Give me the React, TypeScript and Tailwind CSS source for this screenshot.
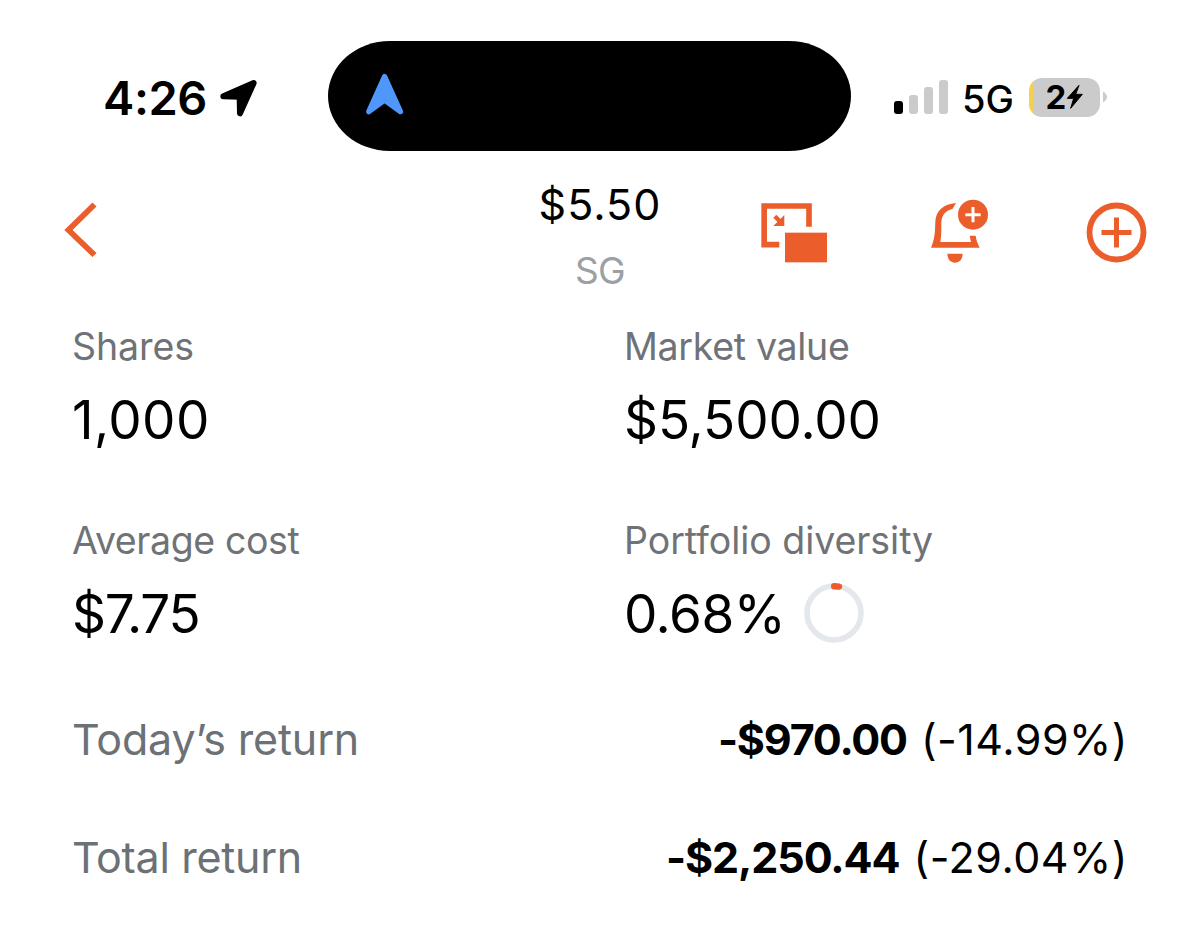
import type { ReactNode } from "react";

const ACCENT = "#eb5d2a";

function LocationArrow() {
  return (
    <svg className="ml-[13px] h-[40px] w-[38px]" viewBox="420 53 114 120">
      <path
        d="M430 107.5 L521 68 L480 159 L479 109 Z"
        fill="#000"
        stroke="#000"
        strokeWidth="18"
        strokeLinejoin="round"
      />
    </svg>
  );
}

function StatusBar() {
  return (
    <div className="flex h-[110px] items-center">
      <div className="flex w-[328px] items-center pt-[3px] pl-[103px]">
        <span className="text-[47px] leading-none font-semibold tracking-[-0.4px]">4:26</span>
        <LocationArrow />
      </div>
      <div className="flex h-[110px] w-[523px] items-center rounded-[62px/55px] bg-black pb-[4px] pl-[36px]">
        <svg className="h-[44px] w-[42px]" viewBox="0 0 42 44">
          <path
            d="M20.6 4.6 L36.4 39.6 L20.6 28 L4.8 39.6 Z"
            fill="#5097fb"
            stroke="#5097fb"
            strokeWidth="5.4"
            strokeLinejoin="round"
          />
        </svg>
      </div>
      <div className="flex items-center pt-[2px] pl-[43px]">
        <div className="flex h-[34px] items-end gap-[6px]">
          <div className="h-[13px] w-[9px] rounded-[3px] bg-black" />
          <div className="h-[19px] w-[9px] rounded-[3px] bg-[#cbcbcb]" />
          <div className="h-[27px] w-[9px] rounded-[3px] bg-[#cbcbcb]" />
          <div className="h-[34px] w-[9px] rounded-[3px] bg-[#cbcbcb]" />
        </div>
        <span className="ml-[14px] pt-1 text-[38px] leading-none font-medium">5G</span>
        <div className="ml-[15px] flex h-[39px] w-[71px] items-center justify-center overflow-hidden rounded-[13px] bg-[linear-gradient(to_right,#f3d04e_4px,#cbcbcb_4px)]">
          <span className="pt-px text-[33px] leading-none font-bold">2</span>
          <svg className="h-[26px] w-[17px]" viewBox="560 76 51 78">
            <path
              d="M599 80 L564 119 H583 L574 149 L609 107 H589 Z"
              stroke="#000"
              strokeWidth="3"
              strokeLinejoin="round"
            />
          </svg>
        </div>
        <svg className="ml-[3px] h-[12px] w-[5px]" viewBox="0 0 5 12">
          <path d="M0 0.5 Q4 3 4 6 Q4 9 0 11.5 Z" fill="#cbcbcb" />
        </svg>
      </div>
    </div>
  );
}

function Header() {
  return (
    <header className="grid h-[132px] grid-cols-[1fr_auto_1fr] items-start px-[53px]">
      <svg className="mt-5 ml-[7px] h-[80px] w-[40px]" viewBox="60 192 40 80" fill="none">
        <path d="M94.5 204.5 L68.5 230 L94.5 255" stroke={ACCENT} strokeWidth="5.8" />
      </svg>
      <div className="flex flex-col items-center">
        <span className="-mt-px text-[43px] leading-[66px] tracking-[1.1px]">$5.50</span>
        <span className="mt-px text-[37px] leading-[66px] tracking-[-0.7px] text-[#9ba0a4]">SG</span>
      </div>
      <div className="mt-5 flex justify-end" style={{ color: ACCENT }}>
        <svg className="h-[80px] w-[70px]" viewBox="60 36 210 240">
          <path d="M118 194 H72.5 V78 H207 V140" fill="none" stroke="currentColor" strokeWidth="17" />
          <rect x="135" y="158" width="126" height="89" fill="currentColor" />
          <path d="M133 105 V138 H100 Z" fill="currentColor" />
          <path d="M109 104 L130 125 L121 134 L100 113 Z" fill="currentColor" />
        </svg>
        <svg className="ml-[100px] h-[80px] w-[60px]" viewBox="570 36 180 240" fill="currentColor">
          <path d="M648 69 C610 72 587 93 586 125 C585 160 584 176 573 203 H719 C712 189 709 181 707 167 H689 L693 186 H601 C604 170 604 150 604 128 C605 106 615 92 638 86 Z" />
          <path d="M622 221 H668 C667 238 659 248 645 248 C631 248 623 238 622 221 Z" />
          <circle cx="699" cy="104" r="45" />
          <path d="M676 104 H722 M699 81 V127" stroke="#fff" strokeWidth="9" />
        </svg>
        <svg className="ml-[96px] h-[80px] w-[61px]" viewBox="1086 192 61 80" fill="none">
          <circle cx="1116.5" cy="232.5" r="27" stroke="currentColor" strokeWidth="5.8" />
          <path d="M1101.5 232.5 h30 M1116.5 217.5 v30" stroke="currentColor" strokeWidth="5" />
        </svg>
      </div>
    </header>
  );
}

interface StatProps {
  label: string;
  labelClass: string;
  valueClass: string;
  children: ReactNode;
}

function Stat({ label, labelClass, valueClass, children }: StatProps) {
  return (
    <div>
      <div className={`text-[37.5px] leading-[60px] text-[#6f7276] ${labelClass}`}>{label}</div>
      <div className={`flex h-[86px] items-center pt-[2px] text-[53px] ${valueClass}`}>{children}</div>
    </div>
  );
}

interface ReturnRowProps {
  label: string;
  amount: string;
  percent: string;
  labelClass: string;
  amountClass: string;
}

function ReturnRow({ label, amount, percent, labelClass, amountClass }: ReturnRowProps) {
  return (
    <div className="flex h-[80px] items-center justify-between text-[43px]">
      <span className={`text-[#6c7176] ${labelClass}`}>{label}</span>
      <span className="flex gap-[14px]">
        <span className={`font-bold ${amountClass}`}>{amount}</span>
        <span className="tracking-[0.5px]">({percent})</span>
      </span>
    </div>
  );
}

export default function App() {
  return (
    <div className="h-[952px] w-[1200px] overflow-hidden bg-white pt-[41px] font-['Inter',sans-serif] text-black">
      <StatusBar />
      <div className="h-[21px]" />
      <Header />
      <main className="pt-[13px] pr-[72px] pl-[72px]">
        <div className="grid grid-cols-[552px_1fr] gap-y-[48px]">
          <Stat label="Shares" labelClass="tracking-[-0.1px]" valueClass="tracking-[0.4px]">
            1,000
          </Stat>
          <Stat label="Market value" labelClass="tracking-[-0.3px]" valueClass="tracking-[-0.1px]">
            $5,500.00
          </Stat>
          <Stat label="Average cost" labelClass="tracking-[-0.4px]" valueClass="tracking-[-1.2px]">
            $7.75
          </Stat>
          <Stat label="Portfolio diversity" labelClass="tracking-[-0.05px]" valueClass="tracking-[-0.5px]">
            0.68%
            <svg className="-mt-[4px] ml-[19px] h-[60px] w-[60px]" viewBox="0 0 60 60" fill="none">
              <circle cx="30" cy="30" r="27" stroke="#e4e8ec" strokeWidth="5.6" />
              <path d="M30.2 3.2 A27 27 0 0 1 35 3.6" stroke={ACCENT} strokeWidth="6.4" strokeLinecap="round" />
            </svg>
          </Stat>
        </div>
        <div className="mt-[42px] flex flex-col gap-[38px]">
          <ReturnRow
            label="Today’s return"
            amount="-$970.00"
            percent="-14.99%"
            labelClass="tracking-[-0.15px]"
            amountClass="tracking-[-1.2px]"
          />
          <ReturnRow
            label="Total return"
            amount="-$2,250.44"
            percent="-29.04%"
            labelClass="tracking-[-0.3px]"
            amountClass="tracking-[-1.1px]"
          />
        </div>
      </main>
    </div>
  );
}
